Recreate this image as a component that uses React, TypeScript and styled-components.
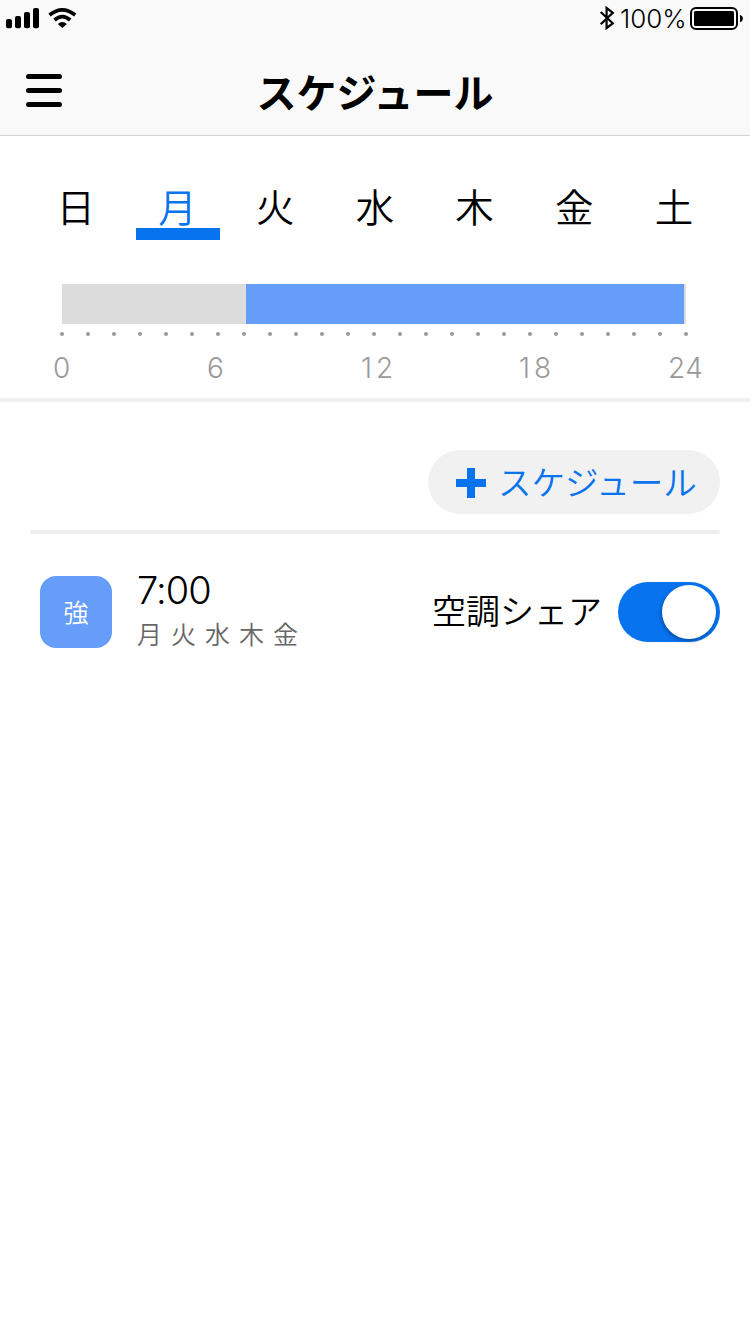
import React from "react";
import styled, { createGlobalStyle } from "styled-components";

const blue = "#0873ee";
const paleBlue = "#659df8";

const GlobalStyle = createGlobalStyle`
  * { box-sizing: border-box; }
  body {
    margin: 0;
    background: #fff;
    color: #000;
    font-family: Inter, "Noto Sans CJK JP", sans-serif;
    font-weight: 300;
  }
  button { font: inherit; border: 0; padding: 0; background: none; }
`;

const Screen = styled.main`
  width: 750px;
  min-height: 1334px;
  background: #fff;
`;

const Header = styled.header`
  height: 136px;
  background: #f9f9f9;
  border-bottom: 1px solid #d4d4d4;
`;

const StatusBar = styled.div`
  height: 40px;
  display: flex;
  justify-content: space-between;
  svg { display: block; }
`;

const StatusGroup = styled.div`
  display: flex;
`;

const BatteryLevel = styled.span`
  width: 74px;
  padding-left: 4px;
  font-size: 26px;
  line-height: 38px;
  white-space: nowrap;
`;

const TitleBar = styled.div`
  height: 95px;
  display: grid;
  grid-template-columns: 100px 1fr 100px;
`;

const MenuButton = styled.button`
  display: flex;
  flex-direction: column;
  gap: 9px;
  padding: 34px 0 0 26px;
`;

const MenuLine = styled.span`
  width: 36px;
  height: 5px;
  border-radius: 2.5px;
  background: #000;
`;

const Title = styled.h1`
  margin: 0;
  text-align: center;
  font-family: "Noto Sans CJK JP", sans-serif;
  font-size: 40px;
  font-weight: 700;
  line-height: 102px;
`;

const Days = styled.nav`
  display: grid;
  grid-template-columns: repeat(7, 99.7px);
  padding: 44px 0 0 26px;
  height: 148px;
`;

const Day = styled.button<{ $active?: boolean }>`
  height: 60px;
  display: flex;
  flex-direction: column;
  align-items: center;
  padding-left: ${(p) => (p.$active ? "4px" : "0")};
  font-family: "Noto Sans CJK JP", sans-serif;
  font-size: 38.5px;
  font-weight: 350;
  line-height: 50px;
  color: ${(p) => (p.$active ? blue : "#000")};
  &::after {
    content: "";
    width: 84px;
    height: 12px;
    margin: -2px 0 0 1px;
    background: ${(p) => (p.$active ? blue : "transparent")};
  }
`;

const Timeline = styled.section`
  height: 118px;
  border-bottom: 4px solid #f0f0f0;
`;

const Track = styled.div`
  display: flex;
  width: 624px;
  height: 40px;
  margin-left: 62px;
  padding: 0 2px 0 184px;
  background: #dcdcdc;
`;

const Range = styled.div`
  flex: 1;
  background: ${paleBlue};
`;

const Ticks = styled.div`
  display: flex;
  justify-content: space-between;
  width: 628px;
  margin: 8px 0 0 60px;
`;

const Tick = styled.i`
  width: 4px;
  height: 4px;
  border-radius: 50%;
  background: #999;
`;

const Hours = styled.div`
  display: grid;
  grid-template-columns: 154px 154px 158px 149px 40px;
  margin: 12px 0 0 53px;
  font-size: 28px;
  line-height: 40px;
  color: #999;
`;

const Hour = styled.span<{ $spaced: boolean }>`
  letter-spacing: ${(p) => (p.$spaced ? "4px" : "0.4px")};
`;

const Toolbar = styled.div`
  display: flex;
  justify-content: flex-end;
  padding: 48px 30px 16px;
`;

const AddButton = styled.button`
  display: flex;
  align-items: center;
  width: 292px;
  height: 64px;
  padding-left: 28px;
  border-radius: 32px;
  background: #f1f1f1;
  color: ${blue};
  font-family: "Noto Sans CJK JP", sans-serif;
  font-size: 33.5px;
  font-weight: 350;
  line-height: 60px;
  white-space: nowrap;
  svg { margin: 2px 12px 0 0; }
  span { padding-bottom: 3px; }
`;

const Divider = styled.hr`
  height: 4px;
  margin: 0 30px;
  border: 0;
  border-radius: 2px;
  background: #efefef;
`;

const Row = styled.article`
  display: flex;
  padding: 42px 30px 0 40px;
`;

const Mode = styled.div`
  width: 72px;
  height: 72px;
  border-radius: 16px;
  background: ${paleBlue};
  color: #fff;
  font-family: "Noto Sans CJK JP", sans-serif;
  font-size: 25px;
  font-weight: 350;
  line-height: 70px;
  text-align: center;
`;

const Details = styled.div`
  flex: 1;
  padding-left: 25px;
`;

const Time = styled.div`
  font-size: 38px;
  line-height: 28px;
  letter-spacing: -1px;
`;

const Repeat = styled.div`
  margin-top: 11px;
  font-family: "Noto Sans CJK JP", sans-serif;
  font-size: 25px;
  font-weight: 350;
  line-height: 36px;
  word-spacing: 3.4px;
  color: #666;
`;

const ShareLabel = styled.span`
  margin-right: 16px;
  font-family: "Noto Sans CJK JP", sans-serif;
  font-size: 34px;
  font-weight: 350;
  line-height: 67px;
`;

const Toggle = styled.button`
  display: flex;
  justify-content: flex-end;
  width: 102px;
  height: 60px;
  margin-top: 6px;
  padding: 3px 4px;
  border-radius: 30px;
  background: ${blue};
`;

const Knob = styled.span`
  width: 54px;
  height: 54px;
  border-radius: 50%;
  background: #fff;
  box-shadow: -1px 2px 4px rgba(0, 0, 0, 0.3);
`;

const SignalIcon = () => (
  <svg width="80" height="32" viewBox="0 0 80 32">
    <rect x="6" y="19" width="6" height="9.3" rx="2" />
    <rect x="15" y="16" width="6" height="12.3" rx="2" />
    <rect x="24" y="12" width="6" height="16.3" rx="2" />
    <rect x="33" y="8" width="6" height="20.3" rx="2" />
    <g fill="none" stroke="#000" strokeWidth="3.7">
      <path d="M49.5 15 Q62.3 4.6 75.2 15" />
      <path d="M54.5 20 Q62.3 13.4 70.2 20" />
    </g>
    <path d="M57.8 23.9 Q62.3 20.2 66.8 23.9 L62.3 28 Z" />
  </svg>
);

const BluetoothIcon = () => (
  <svg width="18" height="36" viewBox="0 0 18 36" fill="none" stroke="#000" strokeWidth="2.2">
    <path d="M2.7 12 L14.8 23.3 L8.6 28 V8 L14.8 12.8 L2.7 24.2" />
  </svg>
);

const BatteryIcon = () => (
  <svg width="60" height="36" viewBox="0 0 60 36">
    <rect x="1" y="8" width="46" height="21" rx="5" fill="none" stroke="#000" strokeWidth="2" />
    <rect x="4" y="11" width="40" height="15" rx="1.5" />
    <path d="M50 14.8 Q53 16 53 18.5 Q53 21 50 22.2 Z" />
  </svg>
);

const PlusIcon = () => (
  <svg width="30" height="30" viewBox="0 0 30 30" fill={blue}>
    <path d="M11 0h8v11h11v8H19v11h-8V19H0v-8h11z" />
  </svg>
);

const weekdays = ["日", "月", "火", "水", "木", "金", "土"];

export default function App() {
  return (
    <Screen>
      <GlobalStyle />
      <Header>
        <StatusBar>
          <SignalIcon />
          <StatusGroup>
            <BluetoothIcon />
            <BatteryLevel>100%</BatteryLevel>
            <BatteryIcon />
          </StatusGroup>
        </StatusBar>
        <TitleBar>
          <MenuButton aria-label="メニュー">
            <MenuLine />
            <MenuLine />
            <MenuLine />
          </MenuButton>
          <Title>スケジュール</Title>
        </TitleBar>
      </Header>
      <Days>
        {weekdays.map((day) => (
          <Day key={day} $active={day === "月"}>{day}</Day>
        ))}
      </Days>
      <Timeline>
        <Track>
          <Range />
        </Track>
        <Ticks>
          {Array.from({ length: 25 }, (_, hour) => (
            <Tick key={hour} />
          ))}
        </Ticks>
        <Hours>
          {[0, 6, 12, 18, 24].map((hour) => (
            <Hour key={hour} $spaced={hour === 12 || hour === 18}>{hour}</Hour>
          ))}
        </Hours>
      </Timeline>
      <Toolbar>
        <AddButton>
          <PlusIcon />
          <span>スケジュール</span>
        </AddButton>
      </Toolbar>
      <Divider />
      <Row>
        <Mode>強</Mode>
        <Details>
          <Time>7:00</Time>
          <Repeat>月 火 水 木 金</Repeat>
        </Details>
        <ShareLabel>空調シェア</ShareLabel>
        <Toggle role="switch" aria-checked="true" aria-label="空調シェア">
          <Knob />
        </Toggle>
      </Row>
    </Screen>
  );
}
